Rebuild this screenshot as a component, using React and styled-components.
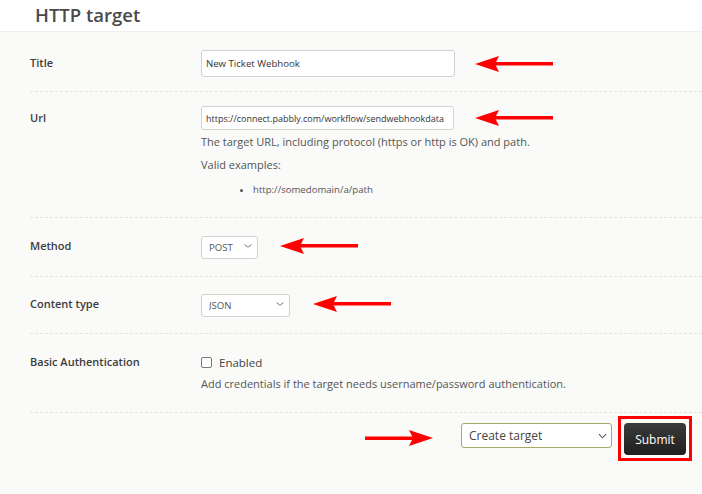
import React from "react";
import styled, { createGlobalStyle } from "styled-components";

const Global = createGlobalStyle`
  html, body { margin: 0; padding: 0; background: #fafaf9; }
  body { font-family: "Open Sans", "Noto Sans", sans-serif; color: #333; }
  * { box-sizing: border-box; }
`;

const Page = styled.div`
  width: 702px;
  height: 494px;
  background: #fafaf9;
  overflow: hidden;
`;

const Header = styled.header`
  height: 32px;
  background: #ffffff;
  border-bottom: 1px solid #efefed;
  padding-left: 35px;
`;

const Heading = styled.h1`
  margin: 0;
  font-size: 18.5px;
  line-height: 30px;
  font-weight: 600;
  color: #4a4a4a;
`;

const Form = styled.div`
  padding-left: 30px;
`;

const Row = styled.div`
  display: grid;
  grid-template-columns: 171px 1fr;
  align-items: start;
  padding-top: ${(p) => p.$top}px;
  padding-bottom: ${(p) => p.$bottom}px;
  border-bottom: 1px dashed #e4e4e2;
`;

const Label = styled.div`
  font-size: 11px;
  font-weight: 600;
  color: #3c3c3c;
  line-height: ${(p) => p.$lh || 24}px;
`;

const Field = styled.div`
  display: flex;
  flex-direction: column;
`;

const ControlLine = styled.div`
  display: flex;
  align-items: center;
`;

const TextInput = styled.input`
  width: ${(p) => p.$w}px;
  height: ${(p) => p.$h}px;
  border: 1px solid #d2d2d0;
  border-radius: 3px;
  background: #fff;
  font-family: "Open Sans", "Noto Sans", sans-serif;
  font-size: ${(p) => p.$fs || 9.6}px;
  color: #333;
  padding: 0 4px;
  outline: none;
`;

const SelectWrap = styled.div`
  position: relative;
  width: ${(p) => p.$w}px;
  height: ${(p) => p.$h}px;
  margin-top: ${(p) => p.$mt || 0}px;
`;

const Select = styled.select`
  appearance: none;
  -webkit-appearance: none;
  width: 100%;
  height: 100%;
  border: 1px solid ${(p) => (p.$accent ? "#a9a968" : "#d2d2d0")};
  border-radius: 3px;
  background: #fff;
  font-family: "Open Sans", "Noto Sans", sans-serif;
  font-size: ${(p) => p.$fs || 9.6}px;
  color: ${(p) => (p.$accent ? "#444" : "#555")};
  padding: 0 ${(p) => p.$pad || 7}px;
  outline: none;
`;

const Chevron = styled.svg`
  position: absolute;
  right: ${(p) => p.$r || 6}px;
  top: 50%;
  transform: translateY(-50%);
  pointer-events: none;
`;

const Help = styled.p`
  margin: 0;
  font-size: 11px;
  line-height: 23px;
  color: #555;
`;

const List = styled.ul`
  margin: 0;
  padding-left: 52px;
  font-size: 9.6px;
  line-height: 28px;
  color: #555;
  li::marker { font-size: 9px; }
`;

const CheckLabel = styled.label`
  display: flex;
  align-items: center;
  gap: 7px;
  height: 20px;
  font-size: 11.5px;
  color: #444;
`;

const Box = styled.span`
  width: 11px;
  height: 11px;
  border: 1px solid #777;
  border-radius: 2px;
  background: #fff;
`;

const Actions = styled.div`
  display: flex;
  justify-content: flex-end;
  align-items: flex-start;
  padding: 3px 10px 0 0;
`;

const SubmitFrame = styled.div`
  margin-left: 6px;
  border: 3px solid #f00;
  padding: 4px 3px 3px 3px;
`;

const Submit = styled.button`
  display: block;
  width: 62px;
  height: 32px;
  border: none;
  border-radius: 4px;
  background: linear-gradient(#3b3b3b, #1f1f1f);
  color: #fff;
  font-family: "Open Sans", "Noto Sans", sans-serif;
  font-size: 12px;
`;

const ArrowSvg = styled.svg`
  margin-left: ${(p) => p.$ml}px;
  margin-right: ${(p) => p.$mr || 0}px;
  margin-top: ${(p) => p.$mt || 0}px;
  flex: none;
  align-self: ${(p) => (p.$mt ? "flex-start" : "center")};
`;

function Arrow({ ml, mr, mt, right, w = 78 }) {
  return (
    <ArrowSvg $ml={ml} $mr={mr} $mt={mt} width={w} height="18" viewBox={`0 0 ${w} 18`}>
      {right ? (
        <>
          <rect x="0" y="7.5" width={w - 20} height="3.5" fill="#f00" />
          <polygon points={`${w},9 ${w - 24},1 ${w - 20},9 ${w - 24},17`} fill="#f00" />
        </>
      ) : (
        <>
          <rect x="18" y="7" width={w - 18} height="3.5" fill="#f00" />
          <polygon points="0,9 24,1 20,9 24,17" fill="#f00" />
        </>
      )}
    </ArrowSvg>
  );
}

function Caret({ r, size = 8 }) {
  return (
    <Chevron $r={r} width={size} height={size * 0.6} viewBox="0 0 10 6">
      <path d="M1 1 L5 5 L9 1" fill="none" stroke="#555" strokeWidth="1.2" />
    </Chevron>
  );
}

export default function App() {
  return (
    <Page>
      <Global />
      <Header>
        <Heading>HTTP target</Heading>
      </Header>
      <Form>
        <Row $top={18} $bottom={14}>
          <Label $lh={26}>Title</Label>
          <ControlLine>
            <TextInput $w={254} $h={27} defaultValue="New Ticket Webhook" />
            <Arrow ml={20} />
          </ControlLine>
        </Row>
        <Row $top={14} $bottom={13}>
          <Label $lh={24}>Url</Label>
          <Field>
            <ControlLine>
              <TextInput
                $w={253}
                $h={24}
                $fs={9}
                defaultValue="https://connect.pabbly.com/workflow/sendwebhookdata"
              />
              <Arrow ml={21} />
            </ControlLine>
            <Help>The target URL, including protocol (https or http is OK) and path.</Help>
            <Help>Valid examples:</Help>
            <List>
              <li>http://somedomain/a/path</li>
            </List>
          </Field>
        </Row>
        <Row $top={16} $bottom={19}>
          <Label $lh={23}>Method</Label>
          <ControlLine>
            <SelectWrap $w={57} $h={23}>
              <Select defaultValue="POST">
                <option>POST</option>
              </Select>
              <Caret r={6} />
            </SelectWrap>
            <Arrow ml={22} />
          </ControlLine>
        </Row>
        <Row $top={15} $bottom={18}>
          <Label $lh={23}>Content type</Label>
          <ControlLine>
            <SelectWrap $w={89} $h={23}>
              <Select defaultValue="JSON">
                <option>JSON</option>
              </Select>
              <Caret r={6} />
            </SelectWrap>
            <Arrow ml={23} />
          </ControlLine>
        </Row>
        <Row $top={18} $bottom={17}>
          <Label $lh={20}>Basic Authentication</Label>
          <Field>
            <CheckLabel>
              <Box />
              Enabled
            </CheckLabel>
            <Help>Add credentials if the target needs username/password authentication.</Help>
          </Field>
        </Row>
      </Form>
      <Actions>
        <Arrow right ml={0} mr={28} mt={13} w={68} />
        <SelectWrap $w={151} $h={25} $mt={7}>
          <Select $accent $fs={12} $pad={7} defaultValue="Create target">
            <option>Create target</option>
          </Select>
          <Caret r={5} size={9} />
        </SelectWrap>
        <SubmitFrame>
          <Submit>Submit</Submit>
        </SubmitFrame>
      </Actions>
    </Page>
  );
}
